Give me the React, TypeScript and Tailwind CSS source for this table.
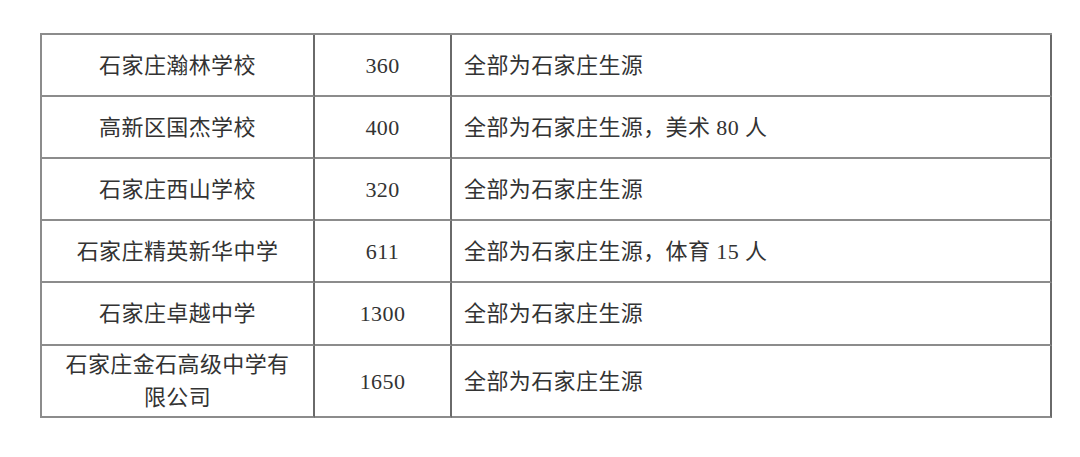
import React from 'react';

type Row = { school: React.ReactNode; count: string; note: string; h: string };

const rows: Row[] = [
  { school: '石家庄瀚林学校', count: '360', note: '全部为石家庄生源', h: 'h-[62px]' },
  { school: '高新区国杰学校', count: '400', note: '全部为石家庄生源，美术 80 人', h: 'h-[62px]' },
  { school: '石家庄西山学校', count: '320', note: '全部为石家庄生源', h: 'h-[62px]' },
  { school: '石家庄精英新华中学', count: '611', note: '全部为石家庄生源，体育 15 人', h: 'h-[62px]' },
  { school: '石家庄卓越中学', count: '1300', note: '全部为石家庄生源', h: 'h-[63px]' },
  {
    school: (
      <>
        石家庄金石高级中学有
        <br />
        限公司
      </>
    ),
    count: '1650',
    note: '全部为石家庄生源',
    h: 'h-[72px]',
  },
];

const App: React.FC = () => {
  return (
    <div
      className="w-[1080px] h-[457px] bg-white pl-[40px] pt-[33px] text-[#333] text-[22px] tracking-[0.4px]"
      style={{ fontFamily: '"Liberation Serif", "Noto Sans CJK SC", serif' }}
    >
      <div className="w-[1012px] grid grid-cols-[273px_137px_600px] border-t-2 border-l-2 border-[#8c8c8c]">
        {rows.map((r, i) => (
          <React.Fragment key={i}>
            <div
              className={`${r.h} flex items-center justify-center text-center leading-[33px] border-r-2 border-r-[#6a6a6a] border-b-2 border-b-[#8c8c8c]`}
            >
              {r.school}
            </div>
            <div
              className={`${r.h} flex items-center justify-center border-r-2 border-r-[#6a6a6a] border-b-2 border-b-[#8c8c8c]`}
            >
              {r.count}
            </div>
            <div
              className={`${r.h} flex items-center pl-[12px] border-r-2 border-r-[#6a6a6a] border-b-2 border-b-[#8c8c8c]`}
            >
              {r.note}
            </div>
          </React.Fragment>
        ))}
      </div>
    </div>
  );
};

export default App;
